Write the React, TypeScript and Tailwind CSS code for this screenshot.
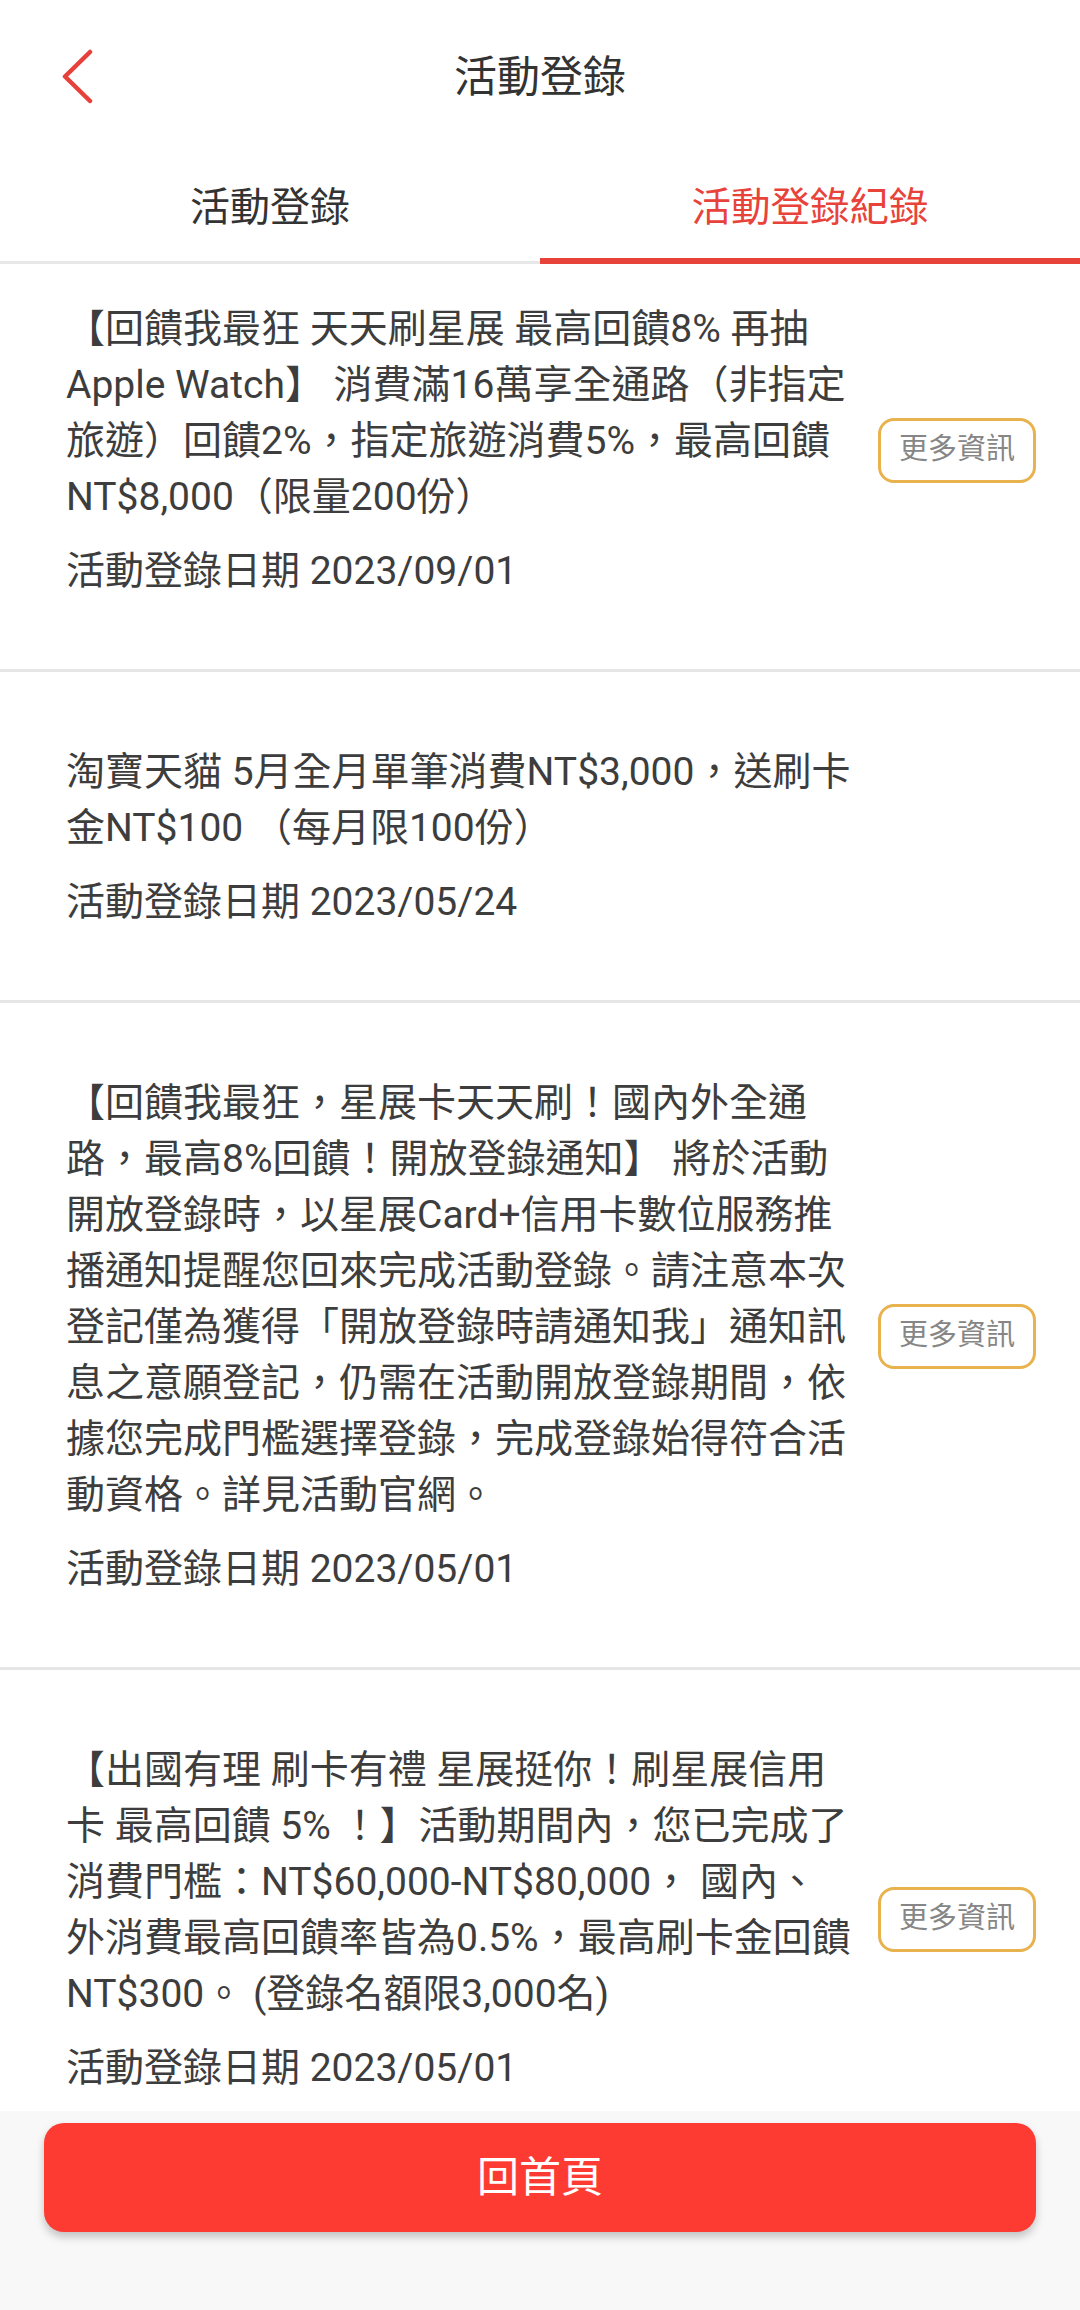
import React from "react";

type Item = {
  lines: string[];
  date: string;
  more?: boolean;
  first?: boolean;
};

const items: Item[] = [
  {
    first: true,
    more: true,
    date: "2023/09/01",
    lines: [
      "【回饋我最狂 天天刷星展 最高回饋8% 再抽",
      "Apple Watch】 消費滿16萬享全通路（非指定",
      "旅遊）回饋2%，指定旅遊消費5%，最高回饋",
      "NT$8,000（限量200份）",
    ],
  },
  {
    date: "2023/05/24",
    lines: ["淘寶天貓 5月全月單筆消費NT$3,000，送刷卡", "金NT$100 （每月限100份）"],
  },
  {
    more: true,
    date: "2023/05/01",
    lines: [
      "【回饋我最狂，星展卡天天刷！國內外全通",
      "路，最高8%回饋！開放登錄通知】 將於活動",
      "開放登錄時，以星展Card+信用卡數位服務推",
      "播通知提醒您回來完成活動登錄。請注意本次",
      "登記僅為獲得「開放登錄時請通知我」通知訊",
      "息之意願登記，仍需在活動開放登錄期間，依",
      "據您完成門檻選擇登錄，完成登錄始得符合活",
      "動資格。詳見活動官網。",
    ],
  },
  {
    more: true,
    date: "2023/05/01",
    lines: [
      "【出國有理 刷卡有禮 星展挺你！刷星展信用",
      "卡 最高回饋 5% ！】活動期間內，您已完成了",
      "消費門檻：NT$60,000-NT$80,000， 國內、",
      "外消費最高回饋率皆為0.5%，最高刷卡金回饋",
      "NT$300。 (登錄名額限3,000名)",
    ],
  },
];

function Record({ item }: { item: Item }) {
  return (
    <div
      className={`flex items-center justify-between border-b-[3px] border-[#e6e6e6] pl-[66px] pr-[44px] pb-[70px] ${
        item.first ? "pt-[37px]" : "pt-[72px]"
      }`}
    >
      <div className="flex flex-col gap-[18px] text-[39px] leading-[56px] text-[#3d3d3d]">
        <div>
          {item.lines.map((l, i) => (
            <div key={i} className="whitespace-nowrap">
              {l}
            </div>
          ))}
        </div>
        <div className="whitespace-nowrap">活動登錄日期 {item.date}</div>
      </div>
      {item.more && (
        <button className="flex h-[65px] w-[158px] shrink-0 items-center justify-center rounded-[16px] border-[3px] border-[#e8b24e] bg-white text-[29px] text-[#868686]">
          更多資訊
        </button>
      )}
    </div>
  );
}

export default function App() {
  return (
    <div
      className="flex h-[2310px] w-[1080px] flex-col overflow-hidden bg-white"
      style={{ fontFamily: '"Roboto", "Noto Sans CJK TC", sans-serif' }}
    >
      <header className="grid h-[154px] grid-cols-[1fr_auto_1fr] items-center">
        <div className="pl-[60px]">
          <svg width="36" height="56" viewBox="0 0 36 56" fill="none">
            <polyline
              points="30,3 5,27.5 30,52"
              stroke="#e8403a"
              strokeWidth="4.5"
              strokeLinecap="round"
              strokeLinejoin="round"
            />
          </svg>
        </div>
        <h1 className="text-[43px] font-normal text-[#333]">活動登錄</h1>
        <div />
      </header>

      <nav className="flex h-[110px] border-b-[3px] border-[#e8e8e8]">
        <div className="flex flex-1 items-center justify-center text-[40px] text-[#333]">
          活動登錄
        </div>
        <div className="-mb-[3px] flex flex-1 items-center justify-center border-b-[6px] border-[#e8433b] pt-[3px] text-[39.5px] text-[#e8433b]">
          活動登錄紀錄
        </div>
      </nav>

      <main className="flex-1 overflow-hidden">
        {items.map((item, i) => (
          <Record key={i} item={item} />
        ))}
      </main>

      <footer className="h-[199px] shrink-0 bg-[#f8f8f8] px-[44px] pt-[12px]">
        <button className="flex h-[109px] w-full items-center justify-center rounded-[20px] bg-[#fe3b33] text-[42px] text-white shadow-[0_5px_8px_rgba(0,0,0,0.22)]">
          回首頁
        </button>
      </footer>
    </div>
  );
}
